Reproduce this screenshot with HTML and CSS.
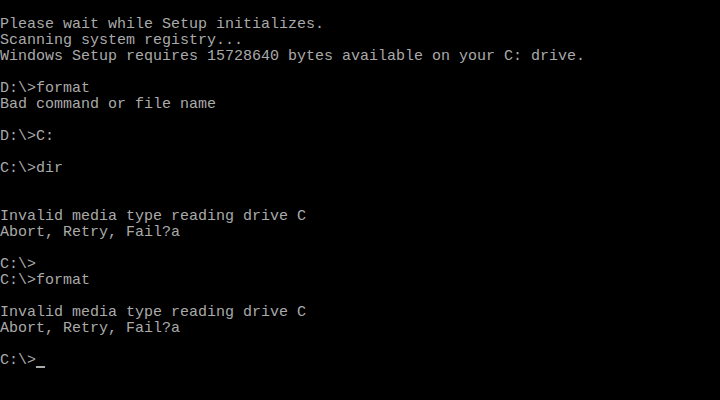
FILE: index.html
```html
<!DOCTYPE html>
<html lang="en">
<head>
  <meta charset="UTF-8">
  <meta name="viewport" content="width=device-width, initial-scale=1.0">
  <title>MS-DOS</title>
  <link rel="stylesheet" href="styles.css">
</head>
<body>
  <pre class="screen">Please wait while Setup initializes.
Scanning system registry...
Windows Setup requires 15728640 bytes available on your C: drive.

D:\>format
Bad command or file name

D:\>C:

C:\>dir


Invalid media type reading drive C
Abort, Retry, Fail?a

C:\>
C:\>format

Invalid media type reading drive C
Abort, Retry, Fail?a

C:\><span class="cursor"></span></pre>
</body>
</html>
```

FILE: styles.css
```css
* { box-sizing: border-box; margin: 0; padding: 0; }
html, body { background: #000; height: 100%; }
body { overflow: hidden; }
.screen {
  padding-top: 17px;
  font-family: "Liberation Mono", "DejaVu Sans Mono", monospace;
  font-size: 15px;
  line-height: 16px;
  color: #aaa;
  white-space: pre;
}
.cursor {
  display: inline-block;
  width: 9px;
  height: 2px;
  background: #aaa;
  vertical-align: -4px;
}
```
